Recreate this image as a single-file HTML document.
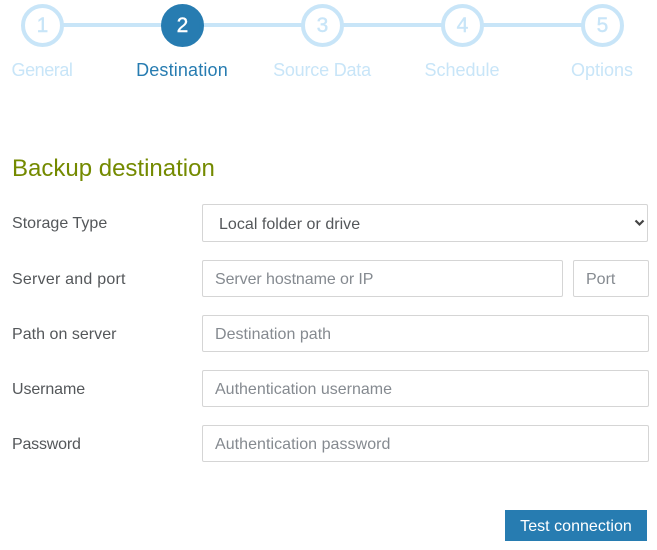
<!DOCTYPE html>
<html lang="en">
<head>
<meta charset="utf-8">
<title>Backup destination</title>
<style>
html,body{margin:0;padding:0;background:#fff;}
body{width:657px;height:550px;position:relative;overflow:hidden;font-family:"Liberation Sans",sans-serif;}
.a{position:absolute;white-space:nowrap;}
.line{position:absolute;top:23px;height:4px;background:#c8e5f8;}
.c{position:absolute;top:4px;width:43px;height:43px;box-sizing:border-box;border:4px solid #c8e5f8;border-radius:50%;background:#fff;color:#c8e5f8;font-size:21px;line-height:36px;text-align:center;font-weight:400;-webkit-text-stroke:.4px currentColor;}
.c.on{background:#277cb1;border-color:#277cb1;color:#fff;}
.s{position:absolute;top:60px;width:140px;text-align:center;font-size:18px;line-height:20px;color:#c8e5f8;white-space:nowrap;}
.s.on{color:#277cb1;}
.l{position:absolute;left:12px;font-size:16px;line-height:20px;color:#54575a;white-space:nowrap;}
.i{position:absolute;box-sizing:border-box;border:1px solid #d5d5d5;border-radius:2px;background:#fff;color:#858a90;font-size:16px;padding-left:12px;white-space:nowrap;overflow:hidden;}
</style>
</head>
<body>
<div class="line" style="left:60px;width:530px"></div>
<div class="c" style="left:21px">1</div>
<div class="c on" style="left:161px">2</div>
<div class="c" style="left:301px">3</div>
<div class="c" style="left:441px">4</div>
<div class="c" style="left:581px">5</div>
<div class="s" style="left:-28px;letter-spacing:-.45px">General</div>
<div class="s on" style="left:112px;letter-spacing:.16px">Destination</div>
<div class="s" style="left:252px;letter-spacing:-.2px">Source Data</div>
<div class="s" style="left:392px">Schedule</div>
<div class="s" style="left:532px">Options</div>

<div class="a" style="left:12px;top:155px;font-size:24px;line-height:28px;color:#748a00">Backup destination</div>

<div class="l" style="top:214px;letter-spacing:.03px">Storage Type</div>
<div class="i" style="left:202px;top:204px;width:446px;height:38px;line-height:39px;padding-left:16px;color:#54575a;letter-spacing:.03px">Local folder or drive
<svg style="position:absolute;left:431px;top:14px" width="11" height="8" viewBox="0 0 11 8"><path d="M1.5 1.5 L5.5 5.5 L9.5 1.5" fill="none" stroke="#444" stroke-width="2.2"/></svg></div>

<div class="l" style="top:270px;letter-spacing:.23px">Server and port</div>
<div class="i" style="left:202px;top:260px;width:361px;height:37px;line-height:38px;letter-spacing:-.08px">Server hostname or IP</div>
<div class="i" style="left:573px;top:260px;width:76px;height:37px;line-height:38px">Port</div>

<div class="l" style="top:325px;letter-spacing:.03px">Path on server</div>
<div class="i" style="left:202px;top:315px;width:447px;height:37px;line-height:38px;letter-spacing:.03px">Destination path</div>

<div class="l" style="top:380px;letter-spacing:-.1px">Username</div>
<div class="i" style="left:202px;top:370px;width:447px;height:37px;line-height:38px">Authentication username</div>

<div class="l" style="top:435px;letter-spacing:-.2px">Password</div>
<div class="i" style="left:202px;top:425px;width:447px;height:37px;line-height:38px;letter-spacing:.05px">Authentication password</div>

<div class="a" style="left:505px;top:510px;width:142px;height:31px;background:#277cb1;color:#fff;font-size:16px;line-height:33px;text-align:center;letter-spacing:.03px">Test connection</div>
</body>
</html>
